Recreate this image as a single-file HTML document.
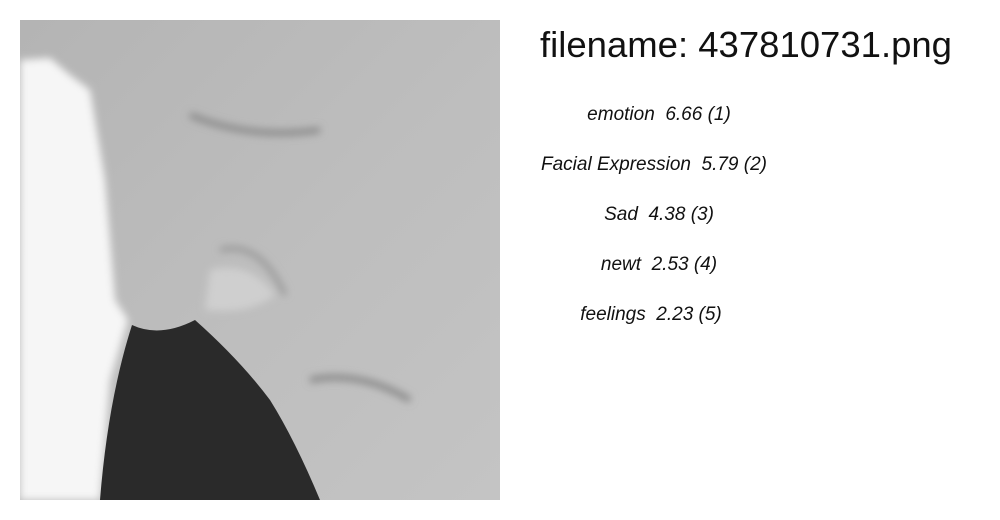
<!DOCTYPE html>
<html><head><style>
body{margin:0;width:1000px;height:520px;background:#fff;position:relative;overflow:hidden;font-family:"Liberation Sans",sans-serif;}
svg{position:absolute;left:20px;top:20px}
h1{position:absolute;left:540px;top:24px;margin:0;font-weight:normal;font-size:36.5px;color:#111;white-space:nowrap}
.t{position:absolute;width:236px;left:540px;text-align:center;font-style:italic;font-size:19px;color:#111}
</style></head><body>
<svg width="480" height="480" viewBox="0 0 480 480">
<defs>
<filter id="b"><feGaussianBlur stdDeviation="4"/></filter>
<linearGradient id="g" x1="0" y1="0" x2="1" y2="1"><stop offset="0" stop-color="#b4b4b4"/><stop offset="0.5" stop-color="#bdbdbd"/><stop offset="1" stop-color="#c4c4c4"/></linearGradient>
</defs>
<rect width="480" height="480" fill="url(#g)"/>
<g filter="url(#b)">
<path d="M0 40 L30 38 L50 55 L70 70 L85 160 L95 280 L108 300 L90 360 L80 480 L0 480Z" fill="#f6f6f6"/>
<path d="M170 95 Q230 120 300 110" stroke="#8a8a8a" stroke-width="6" fill="none"/>
<path d="M200 230 Q240 220 265 275" stroke="#999" stroke-width="5" fill="none"/>
<path d="M290 360 Q340 350 390 380" stroke="#888" stroke-width="6" fill="none"/>
<path d="M190 250 Q230 240 255 275 Q230 295 185 290Z" fill="#cfcfcf"/>
</g>
<path d="M112 305 Q140 318 175 300 Q220 340 250 380 Q275 420 300 480 L80 480 Q88 380 112 305Z" fill="#2a2a2a"/>
</svg>
<h1>filename: 437810731.png</h1>
<div class="t" style="top:104px;left:541px">emotion&nbsp; 6.66 (1)</div>
<div class="t" style="top:154px;left:536px">Facial Expression&nbsp; 5.79 (2)</div>
<div class="t" style="top:204px;left:541px">Sad&nbsp; 4.38 (3)</div>
<div class="t" style="top:254px;left:541px">newt&nbsp; 2.53 (4)</div>
<div class="t" style="top:304px;left:533px">feelings&nbsp; 2.23 (5)</div>
</body></html>
